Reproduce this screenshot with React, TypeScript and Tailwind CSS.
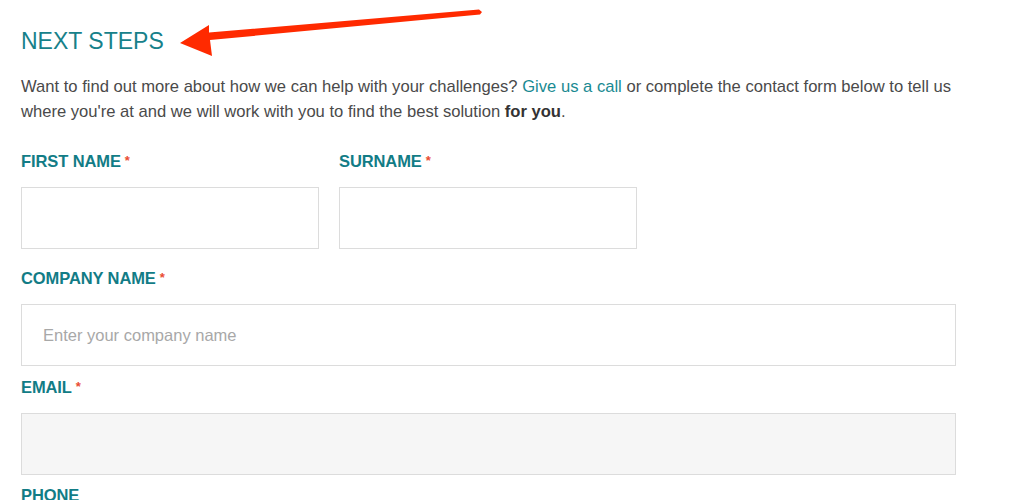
import React from "react";

function Label({ text, required = true }: { text: string; required?: boolean }) {
  return (
    <div className="h-[20px] leading-[20px] text-[16.5px] font-bold text-[#127c86] tracking-[-0.1px] whitespace-nowrap">
      {text}
      {required && <span className="text-[#ea4b32] text-[13px] align-top ml-[4px] font-bold">*</span>}
    </div>
  );
}

export default function App() {
  return (
    <div
      className="relative w-[1024px] h-[500px] overflow-hidden bg-white"
      style={{ fontFamily: '"Liberation Sans", Arial, sans-serif' }}
    >
      <div className="flex flex-col pl-[21px] pt-[27px]">
        <h1 className="text-[23px] leading-[28px] font-normal text-[#17818a]">NEXT STEPS</h1>
        <p className="mt-[19px] text-[16.6px] leading-[25px] text-[#4a4a4a] whitespace-nowrap">
          Want to find out more about how we can help with your challenges?{" "}
          <span className="text-[#1a8a92]">Give us a call</span> or complete the contact form below to tell us
          <br />
          where you're at and we will work with you to find the best solution{" "}
          <span className="font-bold text-[#333]">for you</span>.
        </p>

        <div className="mt-[27px] flex gap-[20px]">
          <div className="flex flex-col">
            <Label text="FIRST NAME" />
            <div className="mt-[16px] w-[298px] h-[62px] border border-[#dcdcdc] bg-white" />
          </div>
          <div className="flex flex-col">
            <Label text="SURNAME" />
            <div className="mt-[16px] w-[298px] h-[62px] border border-[#dcdcdc] bg-white" />
          </div>
        </div>

        <div className="mt-[19px] flex flex-col">
          <Label text="COMPANY NAME" />
          <div className="mt-[16px] w-[935px] h-[62px] border border-[#dcdcdc] bg-white flex items-center pl-[21px] text-[16.5px] text-[#a8a8a8]">
            Enter your company name
          </div>
        </div>

        <div className="mt-[11px] flex flex-col">
          <Label text="EMAIL" />
          <div className="mt-[16px] w-[935px] h-[62px] border border-[#dcdcdc] bg-[#f6f6f6]" />
        </div>

        <div className="mt-[10px] flex flex-col">
          <Label text="PHONE" required={false} />
        </div>
      </div>

      <svg className="absolute left-0 top-0" width="1024" height="80" viewBox="0 0 1024 80">
        <polygon
          points="180,43 209,25 209,32.5 479,9.5 482,12 480,14.5 210,40 212,56"
          fill="#ff2a00"
        />
      </svg>
    </div>
  );
}
